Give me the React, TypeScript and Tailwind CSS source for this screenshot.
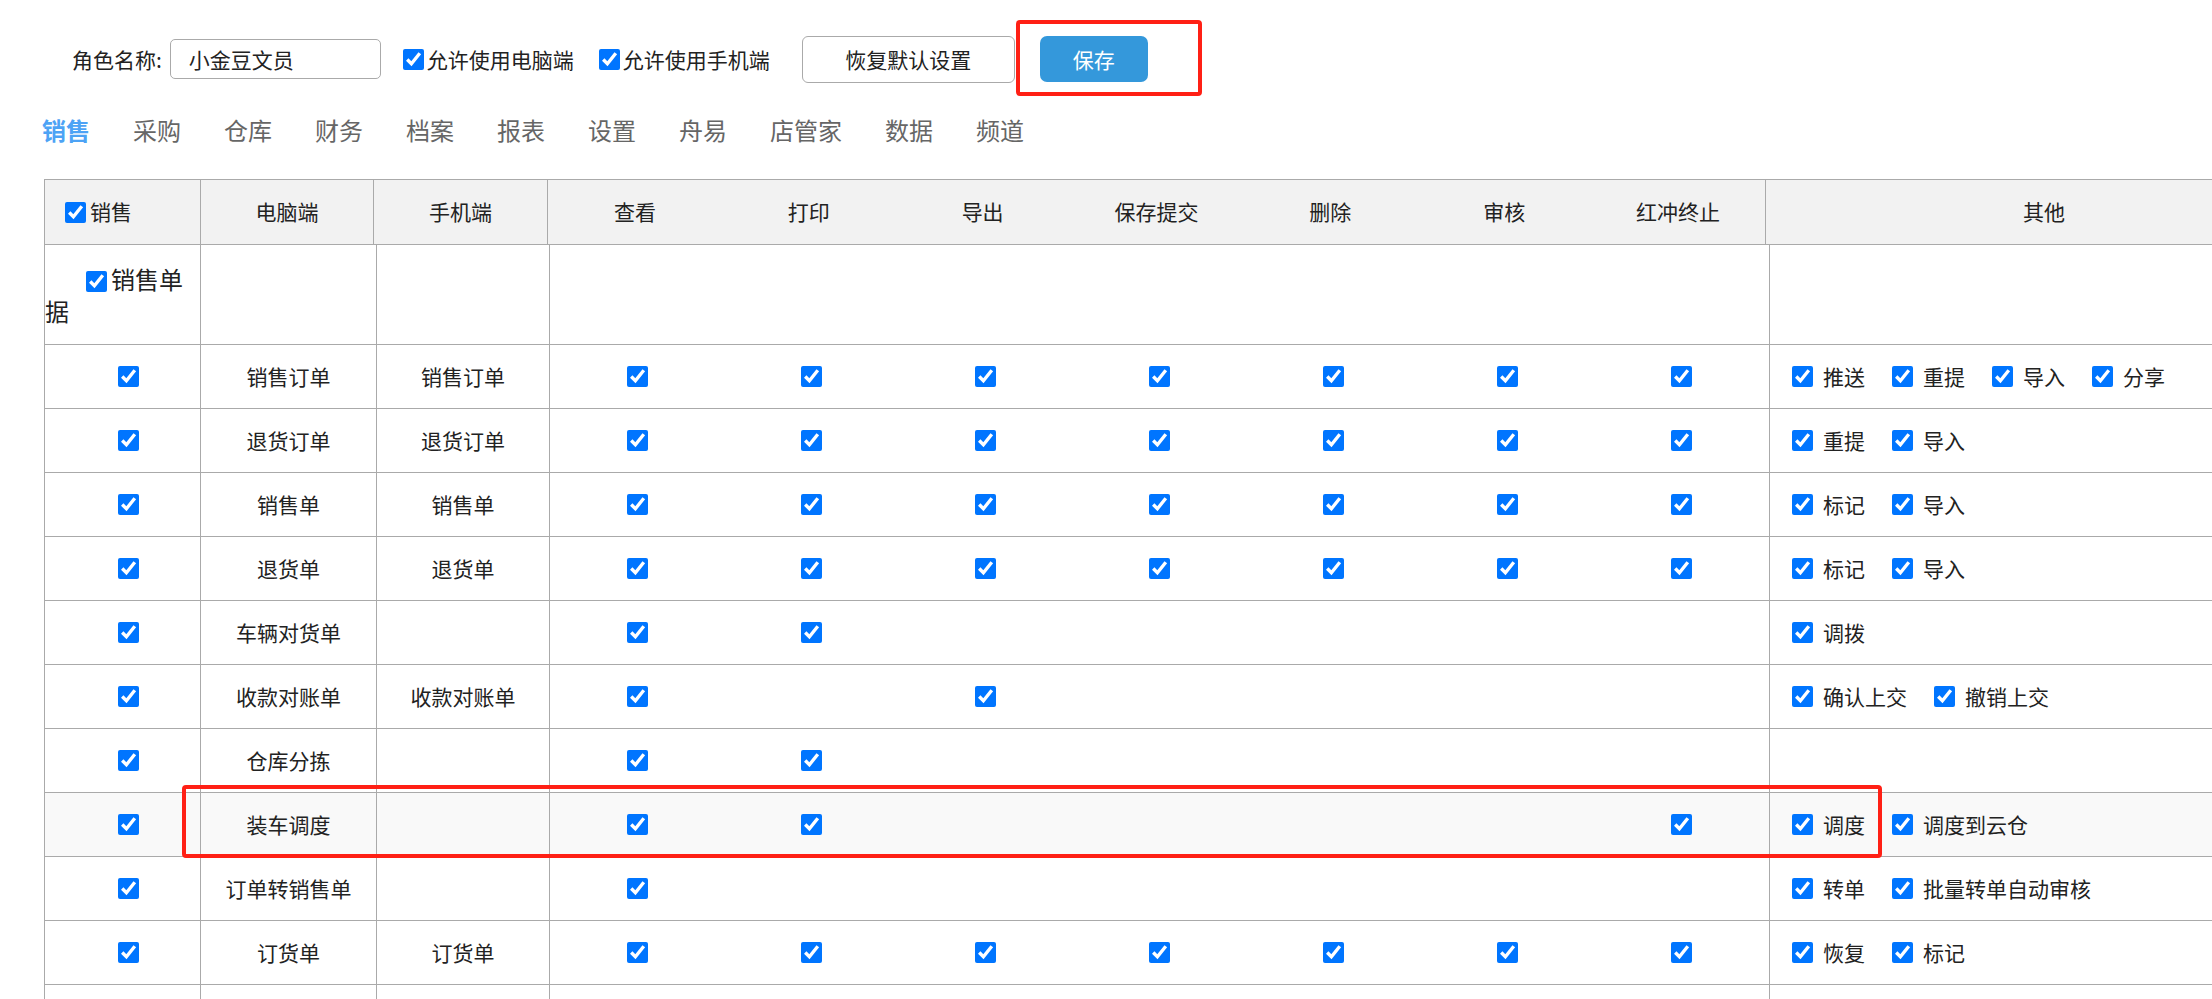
import { useState } from "react";

const cols = ["查看", "打印", "导出", "保存提交", "删除", "审核", "红冲终止"];
const tabs = ["销售", "采购", "仓库", "财务", "档案", "报表", "设置", "舟易", "店管家", "数据", "频道"];

type Row = { pc: string; mobile: string; perms: number[]; others: string[]; hl?: boolean };

const all = [1, 1, 1, 1, 1, 1, 1];
const none = [0, 0, 0, 0, 0, 0, 0];
const rows: Row[] = [
  { pc: "销售订单", mobile: "销售订单", perms: all, others: ["推送", "重提", "导入", "分享"] },
  { pc: "退货订单", mobile: "退货订单", perms: all, others: ["重提", "导入"] },
  { pc: "销售单", mobile: "销售单", perms: all, others: ["标记", "导入"] },
  { pc: "退货单", mobile: "退货单", perms: all, others: ["标记", "导入"] },
  { pc: "车辆对货单", mobile: "", perms: [1, 1, 0, 0, 0, 0, 0], others: ["调拨"] },
  { pc: "收款对账单", mobile: "收款对账单", perms: [1, 0, 1, 0, 0, 0, 0], others: ["确认上交", "撤销上交"] },
  { pc: "仓库分拣", mobile: "", perms: [1, 1, 0, 0, 0, 0, 0], others: [] },
  { pc: "装车调度", mobile: "", perms: [1, 1, 0, 0, 0, 0, 1], others: ["调度", "调度到云仓"], hl: true },
  { pc: "订单转销售单", mobile: "", perms: [1, 0, 0, 0, 0, 0, 0], others: ["转单", "批量转单自动审核"] },
  { pc: "订货单", mobile: "订货单", perms: all, others: ["恢复", "标记"] },
];

function Check() {
  return <input type="checkbox" defaultChecked className="m-0 h-[21px] w-[21px] shrink-0 accent-[#0075ff]" />;
}

export default function App() {
  const [active, setActive] = useState(0);
  return (
    <div className="relative h-[999px] w-[2212px] overflow-hidden bg-white font-['Noto_Sans_CJK_SC',sans-serif] text-[#222]">
      {/* top bar */}
      <div className="flex h-[83px] items-center pl-[72px] pt-[35px]">
        <span className="mr-[8px] text-[21px] leading-none">角色名称:</span>
        <input
          value="小金豆文员"
          readOnly
          className="h-[40px] w-[211px] rounded-[5px] border border-[#aaa] pl-[18px] text-[21px] text-[#222] outline-none"
        />
        <label className="ml-[22px] flex items-center gap-[3px] text-[21px] leading-none">
          <Check />
          允许使用电脑端
        </label>
        <label className="ml-[25px] flex items-center gap-[3px] text-[21px] leading-none">
          <Check />
          允许使用手机端
        </label>
        <button className="ml-[32px] h-[47px] w-[213px] rounded-[6px] border border-[#aaa] bg-white text-[21px] leading-none text-[#222]">
          恢复默认设置
        </button>
        <button className="ml-[25px] h-[46px] w-[108px] rounded-[7px] bg-[#3498db] text-[21px] leading-none text-white">
          保存
        </button>
      </div>

      {/* tabs */}
      <div className="mt-[31px] flex gap-[43px] pl-[42px]">
        {tabs.map((t, i) => (
          <span
            key={t}
            onClick={() => setActive(i)}
            className={
              i === active
                ? "cursor-pointer text-[24px] font-bold leading-[32px] text-[#4da3f5]"
                : "cursor-pointer text-[24px] leading-[32px] text-[#666]"
            }
          >
            {t}
          </span>
        ))}
      </div>

      {/* table */}
      <div className="ml-[44px] mt-[33px] w-[2278px] border-l border-t border-[#aaa] text-[21px]">
        <div className="flex h-[65px] border-b border-[#aaa] bg-[#f2f2f2]">
          <div className="flex w-[156px] items-center gap-[4px] border-r border-[#aaa] pl-[20px]">
            <Check />
            <span>销售</span>
          </div>
          <div className="flex w-[173px] items-center justify-center border-r border-[#aaa]">电脑端</div>
          <div className="flex w-[174px] items-center justify-center border-r border-[#aaa]">手机端</div>
          <div className="grid w-[1218px] grid-cols-7 border-r border-[#aaa]">
            {cols.map((c) => (
              <div key={c} className="flex items-center justify-center">
                {c}
              </div>
            ))}
          </div>
          <div className="flex flex-1 items-center justify-center">其他</div>
        </div>

        <div className="flex h-[100px] border-b border-[#aaa]">
          <div className="flex w-[156px] items-center border-r border-[#aaa]">
            <p className="indent-[41px] text-[24px] leading-[32px]">
              <input
                type="checkbox"
                defaultChecked
                className="m-0 mr-[4px] h-[21px] w-[21px] align-middle accent-[#0075ff]"
              />
              销售单据
            </p>
          </div>
          <div className="w-[176px] border-r border-[#aaa]" />
          <div className="w-[173px] border-r border-[#aaa]" />
          <div className="w-[1220px] border-r border-[#aaa]" />
          <div className="flex-1" />
        </div>

        {rows.map((r) => (
          <div key={r.pc} className={`flex h-[64px] border-b border-[#aaa] ${r.hl ? "bg-[#f9f9f9]" : ""}`}>
            <div className="flex w-[156px] items-center justify-center border-r border-[#aaa] pl-[12px]">
              <Check />
            </div>
            <div className="flex w-[176px] items-center justify-center border-r border-[#aaa]">{r.pc}</div>
            <div className="flex w-[173px] items-center justify-center border-r border-[#aaa]">{r.mobile}</div>
            <div className="grid w-[1220px] grid-cols-7 border-r border-[#aaa]">
              {r.perms.map((p, i) => (
                <div key={i} className="flex items-center justify-center">
                  {p ? <Check /> : null}
                </div>
              ))}
            </div>
            <div className="flex flex-1 items-center pl-[22px]">
              {r.others.map((o) => (
                <label key={o} className="mr-[27px] flex items-center gap-[10px]">
                  <Check />
                  <span>{o}</span>
                </label>
              ))}
            </div>
          </div>
        ))}

        {/* next row, cut off by the window */}
        <div className="flex h-[64px] border-b border-[#aaa]">
          <div className="w-[156px] border-r border-[#aaa]" />
          <div className="w-[176px] border-r border-[#aaa]" />
          <div className="w-[173px] border-r border-[#aaa]" />
          <div className="grid w-[1220px] grid-cols-7 border-r border-[#aaa]">
            {none.map((_, i) => (
              <div key={i} />
            ))}
          </div>
          <div className="flex-1" />
        </div>
      </div>

      {/* red annotation boxes */}
      <div className="pointer-events-none absolute left-[1016px] top-[20px] h-[76px] w-[186px] rounded-[4px] border-4 border-[#ff2015]" />
      <div className="pointer-events-none absolute left-[182px] top-[785px] h-[73px] w-[1700px] rounded-[4px] border-4 border-[#ff2015]" />
    </div>
  );
}
